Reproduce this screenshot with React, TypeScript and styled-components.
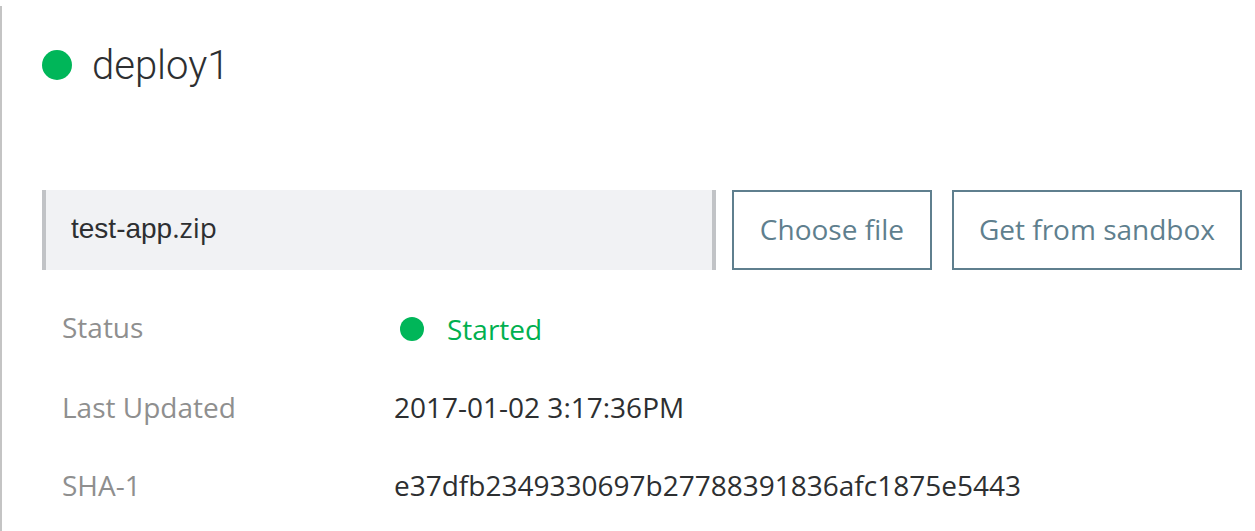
import React from "react";
import styled, { createGlobalStyle } from "styled-components";

const GlobalStyle = createGlobalStyle`
  *, *::before, *::after { box-sizing: border-box; }
  body {
    margin: 0;
    background: #ffffff;
    color: #2d2f31;
    font-family: "Open Sans", "Noto Sans", sans-serif;
    font-size: 28px;
    line-height: 38px;
  }
`;

const Panel = styled.main`
  display: flex;
  flex-direction: column;
  min-height: calc(100vh - 6px);
  margin-top: 6px;
  padding: 34px 13px 0 40px;
  border-left: 2px solid #c4c4c4;
`;

const Header = styled.header`
  display: flex;
  align-items: center;
  gap: 20px;
  height: 50px;
`;

const Dot = styled.span<{ $size: number }>`
  flex: none;
  width: ${({ $size }) => $size}px;
  height: ${({ $size }) => $size}px;
  border-radius: 50%;
  background: #00b659;
`;

const Title = styled.h1`
  margin: 0;
  padding-top: 2px;
  font-family: Roboto, sans-serif;
  font-size: 40px;
  font-weight: 300;
  line-height: 50px;
`;

const Toolbar = styled.div`
  display: flex;
  gap: 20px;
  margin-top: 100px;
`;

const FileField = styled.div`
  display: flex;
  flex: 1;
  align-items: center;
  min-width: 0;
  height: 80px;
  margin-right: -4px;
  padding: 0 25px 4px;
  border: solid #c1c3c6;
  border-width: 0 4px;
  background: #f1f2f4;
`;

const BaseName = styled.span`
  font-family: "Liberation Sans", Arial, sans-serif;
`;

const Button = styled.button`
  flex: none;
  min-width: 200px;
  height: 80px;
  padding: 0 25px 2px;
  border: 2px solid #5f7f8e;
  background: #ffffff;
  color: #5f7f8e;
  font: inherit;
  cursor: pointer;
`;

const Details = styled.dl`
  display: flex;
  flex-direction: column;
  gap: 40px;
  margin: 38px 0 0;
  padding-left: 20px;
`;

const Detail = styled.div`
  display: grid;
  grid-template-columns: 332px 1fr;
`;

const Label = styled.dt`
  color: #8f8f8f;
`;

const Value = styled.dd`
  margin: 0;
`;

const StatusValue = styled(Value)`
  display: flex;
  align-items: center;
  gap: 23px;
  padding: 2px 0 0 6px;
  color: #00b04f;
`;

export default function App() {
  return (
    <>
      <GlobalStyle />
      <Panel>
        <Header>
          <Dot $size={30} />
          <Title>deploy1</Title>
        </Header>
        <Toolbar>
          <FileField>
            <span>
              <BaseName>test-app</BaseName>.zip
            </span>
          </FileField>
          <Button type="button">Choose file</Button>
          <Button type="button">Get from sandbox</Button>
        </Toolbar>
        <Details>
          <Detail>
            <Label>Status</Label>
            <StatusValue>
              <Dot $size={24} />
              Started
            </StatusValue>
          </Detail>
          <Detail>
            <Label>Last Updated</Label>
            <Value>2017-01-02 3:17:36PM</Value>
          </Detail>
          <Detail>
            <Label>SHA-1</Label>
            <Value>e37dfb2349330697b27788391836afc1875e5443</Value>
          </Detail>
        </Details>
      </Panel>
    </>
  );
}
